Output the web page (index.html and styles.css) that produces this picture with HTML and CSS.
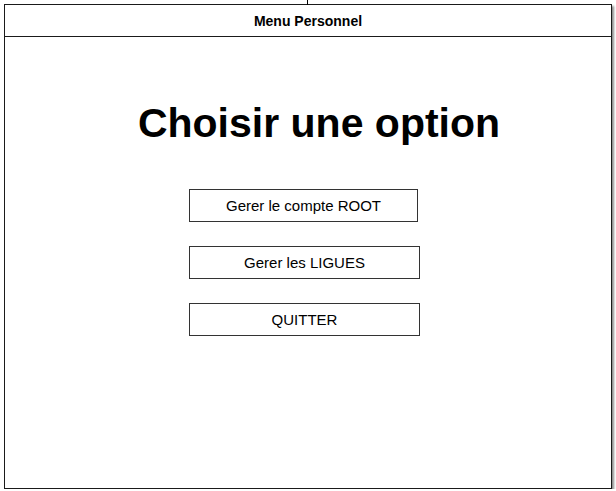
FILE: index.html
```html
<!DOCTYPE html>
<html>
<head>
<meta charset="utf-8">
<link rel="stylesheet" href="styles.css">
</head>
<body>
<div class="connector"></div>
<div class="window">
  <div class="header">Menu Personnel</div>
  <div class="content">
    <h1 class="title">Choisir une option</h1>
    <div class="buttons">
      <div class="btn btn-a">Gerer le compte ROOT</div>
      <div class="btn">Gerer les LIGUES</div>
      <div class="btn">QUITTER</div>
    </div>
  </div>
</div>
</body>
</html>
```
FILE: styles.css
```css
html, body {
  margin: 0;
  padding: 0;
  background: #fff;
  font-family: "Liberation Sans", Arial, sans-serif;
  color: #000;
}
.connector {
  position: absolute;
  left: 307px;
  top: 0;
  width: 1px;
  height: 5px;
  background: #000;
}
.window {
  margin: 4px 0 0 4px;
  width: 608px;
  height: 485px;
  box-sizing: border-box;
  border: 1.5px solid #1a1a1a;
  box-shadow: 2px 2px 2px rgba(0,0,0,0.45);
  display: flex;
  flex-direction: column;
}
.header {
  height: 32px;
  box-sizing: border-box;
  border-bottom: 1.5px solid #1a1a1a;
  display: flex;
  align-items: center;
  justify-content: center;
  font-weight: bold;
  font-size: 14px;
  padding-top: 1px;
}
.content {
  flex: 1;
  display: flex;
  flex-direction: column;
}
.title {
  margin: 62px 0 0 22px;
  text-align: center;
  font-size: 41px;
  line-height: 48px;
  font-weight: bold;
}
.buttons {
  margin: 42px 0 0 184px;
  display: flex;
  flex-direction: column;
  gap: 24px;
}
.btn {
  width: 231px;
  height: 33px;
  box-sizing: border-box;
  border: 1.5px solid #333;
  display: flex;
  align-items: center;
  justify-content: center;
  font-size: 15px;
}
.btn-a {
  width: 229px;
}
```
